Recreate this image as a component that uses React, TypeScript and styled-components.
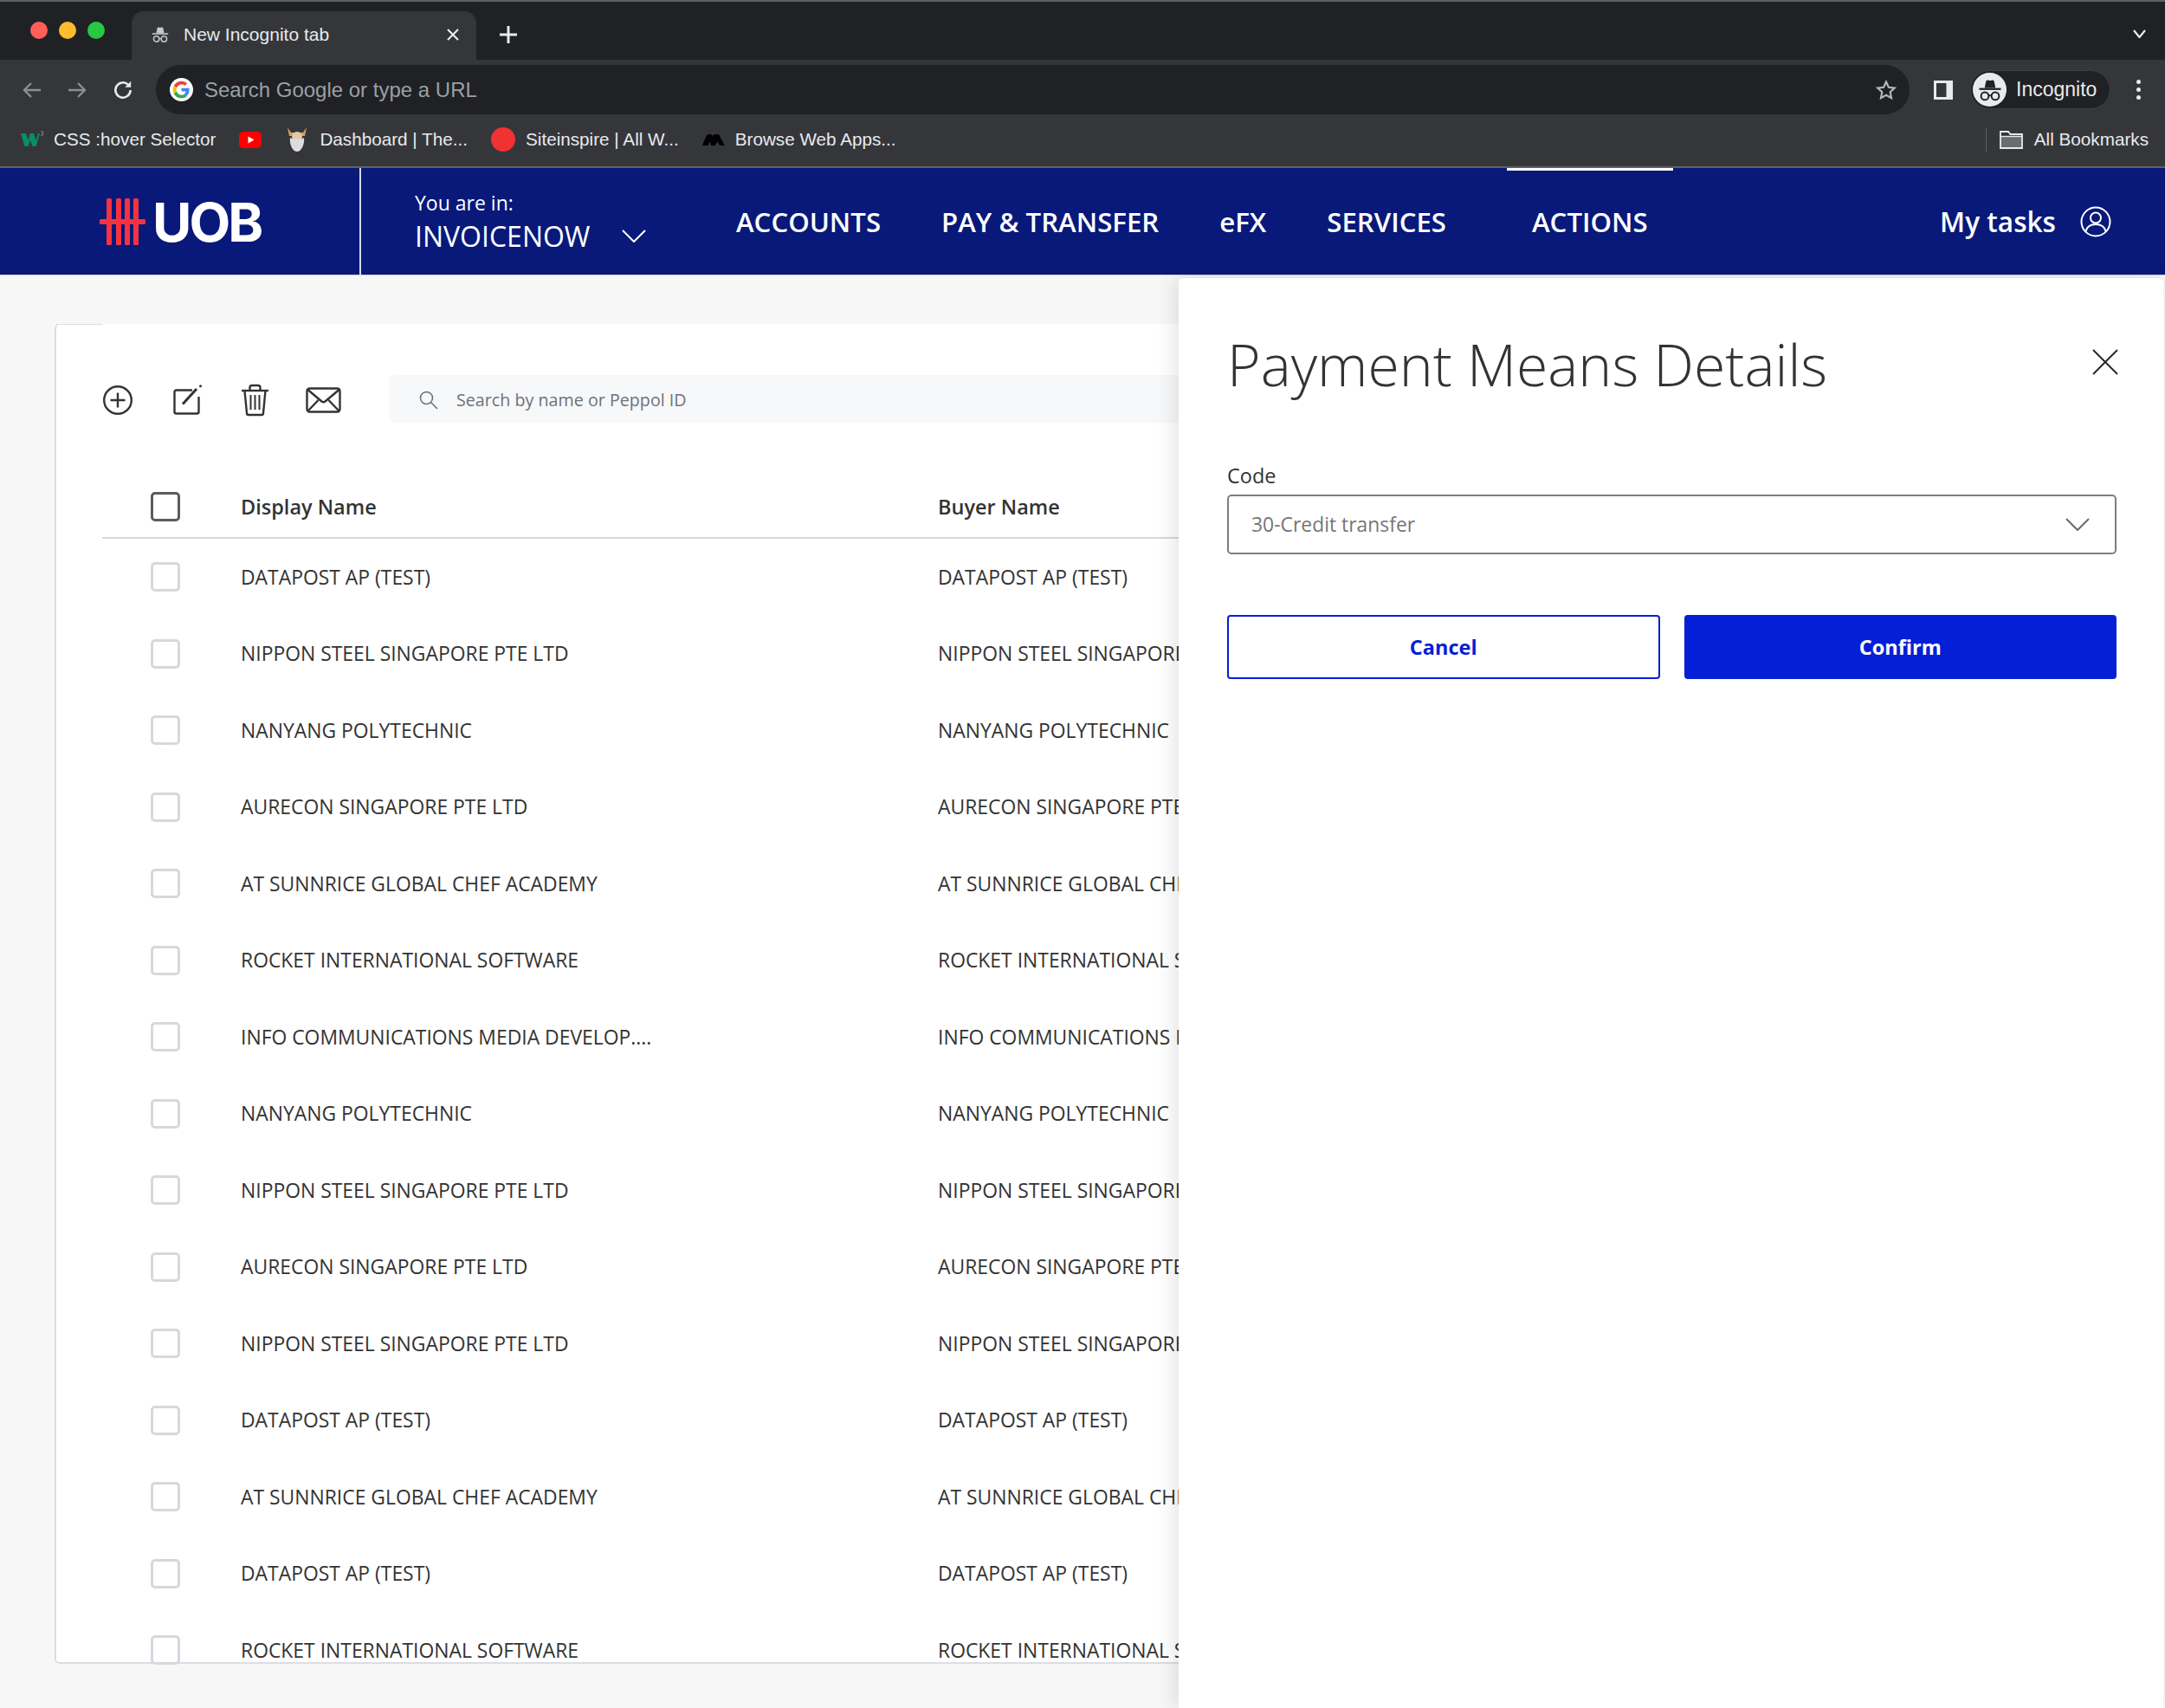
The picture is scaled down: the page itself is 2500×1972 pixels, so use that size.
import React from "react";
import styled, { createGlobalStyle } from "styled-components";

const GlobalStyle = createGlobalStyle`
  html, body {
    margin: 0;
    padding: 0;
    background: #f7f7f7;
  }
  body {
    width: 2500px;
    height: 1972px;
    overflow: hidden;
    font-family: "Open Sans", "Noto Sans", sans-serif;
  }
  * {
    box-sizing: border-box;
  }
`;

const Page = styled.div`
  position: relative;
  width: 2500px;
  height: 1972px;
  overflow: hidden;
  background: #f7f7f7;
`;

/* browser chrome */
const TabStrip = styled.div`
  height: 69px;
  background: #202124;
  border-top: 2px solid #5f6064;
  display: flex;
  align-items: flex-end;
  padding-left: 35px;
`;

const Lights = styled.div`
  display: flex;
  gap: 13px;
  align-self: flex-start;
  margin-top: 23px;
  width: 117px;
`;

const Light = styled.span<{ $color: string }>`
  width: 20px;
  height: 20px;
  border-radius: 50%;
  background: ${(p) => p.$color};
`;

const Tab = styled.div`
  width: 398px;
  height: 56px;
  background: #35363a;
  border-radius: 14px 14px 0 0;
  display: flex;
  align-items: center;
  padding: 0 20px 2px 22px;
  color: #e8eaed;
  font: 400 21px "Liberation Sans", Arial, sans-serif;
`;

const TabTitle = styled.span`
  margin-left: 16px;
  flex: 1;
`;

const NewTab = styled.div`
  margin: 0 0 6px 26px;
  height: 47px;
  display: flex;
  align-items: center;
`;

const TabStripEnd = styled.div`
  margin-left: auto;
  margin-right: 22px;
  height: 60px;
  display: flex;
  align-items: center;
`;

const ToolBar = styled.div`
  height: 63px;
  background: #35363a;
  display: flex;
  align-items: center;
  padding: 6px 0 0 25px;
`;

const NavIcons = styled.div`
  display: flex;
  align-items: center;
  gap: 28px;
  width: 155px;
`;

const Omnibox = styled.div`
  width: 2025px;
  height: 57px;
  border-radius: 29px;
  background: #202124;
  display: flex;
  align-items: center;
  padding: 0 15px 0 16px;
  color: #9aa0a6;
  font: 400 24px "Liberation Sans", Arial, sans-serif;
`;

const OmniText = styled.span`
  margin-left: 13px;
  flex: 1;
`;

const ToolEnd = styled.div`
  display: flex;
  align-items: center;
  margin-left: 27px;
`;

const IncognitoPill = styled.div`
  margin-left: 19px;
  width: 162px;
  height: 45px;
  border-radius: 23px;
  background: #202124;
  border: 1px solid #3f4044;
  display: flex;
  align-items: center;
  padding-left: 2px;
  gap: 11px;
  color: #e8eaed;
  font: 400 23px "Liberation Sans", Arial, sans-serif;
`;

const Avatar = styled.span`
  width: 39px;
  height: 39px;
  border-radius: 50%;
  background: #e8eaed;
  display: flex;
  align-items: center;
  justify-content: center;
`;

const MenuDots = styled.div`
  margin-left: 30px;
  display: flex;
  flex-direction: column;
  gap: 4px;
  span {
    width: 5px;
    height: 5px;
    border-radius: 50%;
    background: #e8eaed;
  }
`;

const BookmarkBar = styled.div`
  height: 62px;
  background: #35363a;
  border-bottom: 2px solid #5f6064;
  display: flex;
  align-items: center;
  padding: 0 19px 2px 24px;
  color: #e8eaed;
  font: 400 20.7px "Liberation Sans", Arial, sans-serif;
`;

const Bookmark = styled.div`
  display: flex;
  align-items: center;
  gap: 12px;
  margin-right: 27px;
`;

const RedDot = styled.span`
  width: 28px;
  height: 28px;
  border-radius: 50%;
  background: #f03232;
`;

const AllBookmarks = styled.div`
  margin-left: auto;
  padding-left: 15px;
  border-left: 1px solid #5f6064;
  display: flex;
  align-items: center;
  gap: 13px;
  height: 27px;
`;

/* bank header */
const Header = styled.header`
  height: 124px;
  background: #08197a;
  color: #fff;
  display: flex;
  align-items: center;
  border-bottom: 1px solid #c9cbd8;
`;

const LogoCell = styled.div`
  width: 417px;
  height: 100%;
  border-right: 2px solid #d7d9e6;
  display: flex;
  align-items: center;
  padding-left: 115px;
  gap: 7px;
`;

const LogoText = styled.span`
  font: 700 62px Inter, "Liberation Sans", sans-serif;
  letter-spacing: -3px;
  line-height: 1;
  padding-top: 2px;
`;

const Context = styled.div`
  margin-left: 62px;
  width: 371px;
  display: flex;
  flex-direction: column;
`;

const ContextLabel = styled.div`
  font-size: 23px;
  font-weight: 400;
  line-height: 32px;
`;

const ContextValue = styled.div`
  font-size: 32px;
  font-weight: 500;
  line-height: 42px;
  padding-top: 2px;
  display: flex;
  align-items: center;
  gap: 37px;
`;

const NavList = styled.nav`
  display: flex;
  gap: 70px;
  height: 100%;
`;

const NavItem = styled.div<{ $active?: boolean }>`
  font-size: 31.2px;
  font-weight: 600;
  display: flex;
  align-items: center;
  padding: 0 ${(p) => (p.$active ? "29px" : "0")};
  border-top: 3px solid ${(p) => (p.$active ? "#ffffff" : "transparent")};
  border-bottom: 3px solid transparent;
`;

const Tasks = styled.div`
  margin-left: auto;
  margin-right: 62px;
  display: flex;
  align-items: center;
  gap: 28px;
  font-size: 31.6px;
  font-weight: 600;
`;

/* table card */
const Card = styled.section`
  position: relative;
  margin: 56px 64px 0 63px;
  height: 1547px;
  background: #fff;
  border-left: 2px solid #dcdde1;
  border-bottom: 2px solid #dcdde3;
  border-radius: 6px;
  padding: 59px 0 0 53px;
  &::before {
    content: "";
    position: absolute;
    left: 0;
    top: 0;
    width: 54px;
    height: 1px;
    background: #dcdde1;
  }
`;

const ActionRow = styled.div`
  display: flex;
  align-items: center;
  height: 55px;
`;

const ActionIcon = styled.span<{ $w: number; $gap: number }>`
  display: flex;
  justify-content: center;
  padding-top: 2px;
  width: ${(p) => p.$w}px;
  margin-right: ${(p) => p.$gap}px;
`;

const SearchBox = styled.div`
  flex: 1;
  height: 55px;
  background: #f7f8fa;
  border-radius: 6px;
  display: flex;
  align-items: center;
  padding: 2px 0 0 34px;
  gap: 21px;
  color: #6f7278;
  font-size: 19.7px;
`;

const TableGrid = styled.div<{ $head?: boolean }>`
  display: grid;
  grid-template-columns: 160px 805px 1fr;
  align-items: center;
  height: ${(p) => (p.$head ? "72px" : "88.5px")};
  font-size: ${(p) => (p.$head ? "23.5px" : "22.9px")};
  color: #333;
  font-weight: ${(p) => (p.$head ? 600 : 400)};
  ${(p) => (p.$head ? "margin-top: 62px; border-bottom: 2px solid #d8d8d8;" : "")}
`;

const CheckBox = styled.span<{ $head?: boolean }>`
  display: block;
  width: 34px;
  height: 34px;
  margin-left: 56px;
  background: #fff;
  border-radius: 5px;
  border: ${(p) => (p.$head ? "3px solid #5c5c5c" : "3px solid #d6d8de")};
`;

const Cell = styled.span`
  white-space: nowrap;
`;

/* side panel */
const Panel = styled.aside`
  position: absolute;
  z-index: 2;
  top: 320px;
  left: 1361px;
  width: 1137px;
  bottom: 0;
  background: #fff;
  border-top: 1px solid #dfe1e6;
  border-radius: 6px 6px 0 0;
  box-shadow: -6px 0 22px rgba(0, 0, 0, 0.1);
  padding: 0 54px 0 56px;
`;

const PanelHead = styled.div`
  height: 197px;
  display: flex;
  justify-content: space-between;
  padding-top: 56px;
`;

const Title = styled.h1`
  margin: 0;
  font-size: 66.1px;
  font-weight: 300;
  line-height: 86px;
  color: #333;
`;

const CloseIcon = styled.span`
  margin: 26px -2px 0 0;
  height: 30px;
`;

const FieldLabel = styled.label`
  display: block;
  margin-top: 14px;
  font-size: 23.5px;
  line-height: 34px;
  color: #333;
`;

const Select = styled.div`
  margin-top: 5px;
  height: 69px;
  border: 2px solid #7d7d7d;
  border-radius: 5px;
  display: flex;
  align-items: center;
  justify-content: space-between;
  padding: 0 29px 0 26px;
  font-size: 22.9px;
  color: #767676;
`;

const ButtonRow = styled.div`
  margin-top: 70px;
  display: grid;
  grid-template-columns: 1fr 1fr;
  gap: 28px;
`;

const Button = styled.button<{ $primary?: boolean }>`
  height: 74px;
  border-radius: 4px;
  border: 2px solid #051fd6;
  background: ${(p) => (p.$primary ? "#051fd6" : "#fff")};
  color: ${(p) => (p.$primary ? "#fff" : "#051fd6")};
  font: 700 23.5px "Open Sans", sans-serif;
`;

const rows = [
  "DATAPOST AP (TEST)",
  "NIPPON STEEL SINGAPORE PTE LTD",
  "NANYANG POLYTECHNIC",
  "AURECON SINGAPORE PTE LTD",
  "AT SUNNRICE GLOBAL CHEF ACADEMY",
  "ROCKET INTERNATIONAL SOFTWARE",
  "INFO COMMUNICATIONS MEDIA DEVELOP....",
  "NANYANG POLYTECHNIC",
  "NIPPON STEEL SINGAPORE PTE LTD",
  "AURECON SINGAPORE PTE LTD",
  "NIPPON STEEL SINGAPORE PTE LTD",
  "DATAPOST AP (TEST)",
  "AT SUNNRICE GLOBAL CHEF ACADEMY",
  "DATAPOST AP (TEST)",
  "ROCKET INTERNATIONAL SOFTWARE",
];

const SpyIcon = ({ color, size }: { color: string; size: number }) => (
  <svg width={size} height={size} viewBox="0 0 24 24" fill="none">
    <path d="M7 10l1.200-6q.3-1.500 2-1.200l1.800.5 1.800-.5q1.700-.3 2 1.200L17 10z" fill={color} />
    <path d="M2 11h20" stroke={color} strokeWidth="1.800" />
    <circle cx="7.200" cy="17.500" r="3.500" stroke={color} strokeWidth="1.600" />
    <circle cx="16.800" cy="17.500" r="3.500" stroke={color} strokeWidth="1.600" />
    <path d="M10.700 17h2.600" stroke={color} strokeWidth="1.400" />
  </svg>
);

const Chevron = ({ w, h, color, sw = 2 }: { w: number; h: number; color: string; sw?: number }) => (
  <svg width={w} height={h} viewBox={`0 0 ${w} ${h}`} fill="none">
    <path d={`M1 1L${w / 2} ${h - 1}L${w - 1} 1`} stroke={color} strokeWidth={sw} />
  </svg>
);

const GoogleG = () => (
  <svg width="27" height="27" viewBox="0 0 48 48">
    <circle cx="24" cy="24" r="24" fill="#fff" />
    <g transform="translate(6.5 6.5) scale(.73)">
      <path fill="#EA4335" d="M24 9.5c3.5 0 6.7 1.2 9.2 3.6l6.9-6.9C35.9 2.4 30.5 0 24 0 14.6 0 6.5 5.4 2.6 13.2l8 6.2C12.4 13.7 17.7 9.5 24 9.5z" />
      <path fill="#4285F4" d="M46.1 24.5c0-1.6-.1-3.1-.4-4.5H24v9h12.4c-.5 2.9-2.2 5.3-4.6 7l7.2 5.6c4.2-3.9 7.1-9.6 7.1-17.1z" />
      <path fill="#FBBC05" d="M10.5 28.6c-.5-1.4-.8-3-.8-4.6s.3-3.2.8-4.6l-8-6.2C.9 16.5 0 20.1 0 24s.9 7.5 2.6 10.8l7.9-6.2z" />
      <path fill="#34A853" d="M24 48c6.5 0 11.9-2.1 15.9-5.8l-7.2-5.6c-2.2 1.5-5 2.4-8.7 2.4-6.3 0-11.6-4.2-13.5-9.9l-8 6.2C6.5 42.6 14.6 48 24 48z" />
    </g>
  </svg>
);

const Arrow = ({ flip }: { flip?: boolean }) => (
  <svg width="24" height="24" viewBox="0 0 24 24" fill="none" style={flip ? { transform: "scaleX(-1)" } : undefined}>
    <path d="M22 12H3M11 4l-8 8 8 8" stroke="#8b8e93" strokeWidth="2.4" />
  </svg>
);

const Reload = () => (
  <svg width="26" height="26" viewBox="0 0 24 24" fill="none">
    <path d="M20 12a8 8 0 1 1-2.6-5.9" stroke="#e8eaed" strokeWidth="2.4" />
    <path d="M20.5 2.5v6.4h-6.4z" fill="#e8eaed" />
  </svg>
);

const Star = () => (
  <svg width="24" height="24" viewBox="0 0 24 24" fill="none">
    <path d="M12 2.5l2.9 6.3 6.8.8-5 4.7 1.3 6.8-6-3.4-6 3.4 1.3-6.8-5-4.7 6.8-.8z" stroke="#b4b7bc" strokeWidth="2.200" />
  </svg>
);

const SidePanel = () => (
  <svg width="24" height="24" viewBox="0 0 24 24">
    <path fillRule="evenodd" d="M1 1h22v22H1zM4 4v16h11.500V4z" fill="#e8eaed" />
  </svg>
);

const W3Logo = () => (
  <svg width="26" height="20" viewBox="0 0 26 20">
    <path d="M0 3h6l2.5 8L11 3h4l2.5 8L20 3h2l-4.5 15h-4L11 11l-2.500 7h-4z" fill="#0a8f5f" />
    <path d="M23 1h2.500v4H23" stroke="#8a8a8a" strokeWidth="1" fill="none" />
  </svg>
);

const YouTube = () => (
  <svg width="26" height="19" viewBox="0 0 26 19">
    <rect width="26" height="19" rx="5" fill="#f00" />
    <path d="M10.500 5.500l7 4-7 4z" fill="#fff" />
  </svg>
);

const Viking = () => (
  <svg width="28" height="30" viewBox="-2 0 28 30">
    <path d="M1 1l4 6h14l4-6-2 10H3z" fill="#cfa368" />
    <circle cx="12" cy="12" r="6" fill="#e5c9a5" />
    <path d="M4 13c2 2 14 2 16 0 1 8-3 16-8 16S3 21 4 13z" fill="#dcdcdc" />
  </svg>
);

const Bricks = () => (
  <svg width="26" height="14" viewBox="0 0 26 14">
    <path d="M0 14L4 4Q5 1 8 1h1q3 0 2.500 3l1-2q1-1 3-1h1.500q3 0 3.500 3l2 4 3.500 6h-6l-2.500-5-2.500 5h-5l-1-5-2.500 5z" fill="#000" />
  </svg>
);

const Folder = () => (
  <svg width="27" height="21" viewBox="0 0 27 21" fill="none">
    <path d="M1 7h25v13H1z" fill="#6b6c70" />
    <path d="M1 1h9l2.500 3H26v16H1z" stroke="#e8eaed" strokeWidth="1.800" />
    <path d="M1 6.500h25" stroke="#e8eaed" strokeWidth="1.400" />
  </svg>
);

const LogoMark = () => (
  <svg width="54" height="54" viewBox="0 0 54 54" fill="#f5333f">
    <rect x="8" y="0" width="6" height="54" rx="1.500" />
    <rect x="19" y="0" width="6" height="54" rx="1.500" />
    <rect x="29" y="0" width="6" height="54" rx="1.500" />
    <rect x="39" y="0" width="6" height="54" rx="1.500" />
    <rect x="0" y="24" width="53" height="6" rx="1.500" />
  </svg>
);

const PersonIcon = () => (
  <svg width="36" height="36" viewBox="0 0 36 36" fill="none" stroke="#fff" strokeWidth="2">
    <circle cx="18" cy="18" r="16.500" />
    <circle cx="18" cy="13.500" r="6" />
    <path d="M6.500 29c1.500-6 6-8 11.500-8s10 2 11.500 8" />
  </svg>
);

const PlusCircle = () => (
  <svg width="36" height="36" viewBox="0 0 36 36" fill="none" stroke="#333" strokeWidth="2.400">
    <circle cx="18" cy="18" r="15.800" />
    <path d="M18 9.500v17M9.500 18h17" />
  </svg>
);

const EditBox = () => (
  <svg width="34" height="35" viewBox="0 0 34 35" fill="none" stroke="#333" strokeWidth="2.400">
    <path d="M22 6.500H3.500A2 2 0 0 0 1.500 8.500v23a2 2 0 0 0 2 2h24a2 2 0 0 0 2-2V14" />
    <path d="M11 22.500L27 5" strokeWidth="3" />
    <circle cx="31.500" cy="1.800" r="1.500" fill="#333" stroke="none" />
  </svg>
);

const TrashIcon = () => (
  <svg width="33" height="38" viewBox="0 0 33 38" fill="none" stroke="#333" strokeWidth="2.400">
    <path d="M1 8h31" />
    <path d="M10.500 7.500V4.500a2.500 2.500 0 0 1 2.500-2.500h7a2.500 2.500 0 0 1 2.500 2.500v3" />
    <path d="M4.500 8l2.500 26a2 2 0 0 0 2 2h15a2 2 0 0 0 2-2l2.500-26" />
    <path d="M11.500 13v17M16.500 13v17M21.500 13v17" strokeWidth="2" />
  </svg>
);

const MailIcon = () => (
  <svg width="41" height="30" viewBox="0 0 41 30" fill="none" stroke="#333" strokeWidth="2.400">
    <rect x="1.500" y="1.500" width="38" height="27" rx="3" />
    <path d="M2.500 3l16 13.500q2 1.500 4 0L38.500 3M3 27l11.500-12M38 27L26.500 15" />
  </svg>
);

const SearchGlyph = () => (
  <svg width="22" height="22" viewBox="0 0 22 22" fill="none" stroke="#6f7278" strokeWidth="1.600">
    <circle cx="8.500" cy="8.500" r="7" />
    <path d="M13.500 13.500L21 21" />
  </svg>
);

const CloseGlyph = () => (
  <svg width="30" height="30" viewBox="0 0 30 30" fill="none" stroke="#222" strokeWidth="1.800">
    <path d="M1 1l28 28M29 1L1 29" />
  </svg>
);

const App = () => {
  return (
    <Page>
      <GlobalStyle />
      <TabStrip>
        <Lights>
          <Light $color="#ff5f57" />
          <Light $color="#febc2e" />
          <Light $color="#28c840" />
        </Lights>
        <Tab>
          <SpyIcon color="#c4c7cc" size={22} />
          <TabTitle>New Incognito tab</TabTitle>
          <svg width="14" height="14" viewBox="0 0 14 14" stroke="#e8eaed" strokeWidth="2.200">
            <path d="M1 1l12 12M13 1L1 13" />
          </svg>
        </Tab>
        <NewTab>
          <svg width="22" height="22" viewBox="0 0 22 22" stroke="#e8eaed" strokeWidth="3">
            <path d="M11 1v20M1 11h20" />
          </svg>
        </NewTab>
        <TabStripEnd>
          <Chevron w={15} h={10} color="#e8eaed" sw={2.2} />
        </TabStripEnd>
      </TabStrip>
      <ToolBar>
        <NavIcons>
          <Arrow />
          <Arrow flip />
          <Reload />
        </NavIcons>
        <Omnibox>
          <GoogleG />
          <OmniText>Search Google or type a URL</OmniText>
          <Star />
        </Omnibox>
        <ToolEnd>
          <SidePanel />
          <IncognitoPill>
            <Avatar>
              <SpyIcon color="#202124" size={30} />
            </Avatar>
            Incognito
          </IncognitoPill>
          <MenuDots>
            <span />
            <span />
            <span />
          </MenuDots>
        </ToolEnd>
      </ToolBar>
      <BookmarkBar>
        <Bookmark>
          <W3Logo />
          CSS :hover Selector
        </Bookmark>
        <Bookmark>
          <YouTube />
        </Bookmark>
        <Bookmark>
          <Viking />
          Dashboard | The...
        </Bookmark>
        <Bookmark>
          <RedDot />
          Siteinspire | All W...
        </Bookmark>
        <Bookmark>
          <Bricks />
          Browse Web Apps...
        </Bookmark>
        <AllBookmarks>
          <Folder />
          All Bookmarks
        </AllBookmarks>
      </BookmarkBar>

      <Header>
        <LogoCell>
          <LogoMark />
          <LogoText>UOB</LogoText>
        </LogoCell>
        <Context>
          <ContextLabel>You are in:</ContextLabel>
          <ContextValue>
            INVOICENOW
            <Chevron w={28} h={15} color="#fff" />
          </ContextValue>
        </Context>
        <NavList>
          <NavItem>ACCOUNTS</NavItem>
          <NavItem>PAY &amp; TRANSFER</NavItem>
          <NavItem>eFX</NavItem>
          <NavItem>SERVICES</NavItem>
          <NavItem $active>ACTIONS</NavItem>
        </NavList>
        <Tasks>
          My tasks
          <PersonIcon />
        </Tasks>
      </Header>

      <Card>
        <ActionRow>
          <ActionIcon $w={36} $gap={46}>
            <PlusCircle />
          </ActionIcon>
          <ActionIcon $w={34} $gap={44}>
            <EditBox />
          </ActionIcon>
          <ActionIcon $w={33} $gap={42}>
            <TrashIcon />
          </ActionIcon>
          <ActionIcon $w={41} $gap={56}>
            <MailIcon />
          </ActionIcon>
          <SearchBox>
            <SearchGlyph />
            Search by name or Peppol ID
          </SearchBox>
        </ActionRow>
        <TableGrid $head>
          <CheckBox $head />
          <Cell>Display Name</Cell>
          <Cell>Buyer Name</Cell>
        </TableGrid>
        {rows.map((name, i) => (
          <TableGrid key={i}>
            <CheckBox />
            <Cell>{name}</Cell>
            <Cell>{name}</Cell>
          </TableGrid>
        ))}
      </Card>

      <Panel>
        <PanelHead>
          <Title>Payment Means Details</Title>
          <CloseIcon>
            <CloseGlyph />
          </CloseIcon>
        </PanelHead>
        <FieldLabel>Code</FieldLabel>
        <Select>
          30-Credit transfer
          <Chevron w={28} h={15} color="#6a6a6a" />
        </Select>
        <ButtonRow>
          <Button>Cancel</Button>
          <Button $primary>Confirm</Button>
        </ButtonRow>
      </Panel>
    </Page>
  );
};

export default App;
